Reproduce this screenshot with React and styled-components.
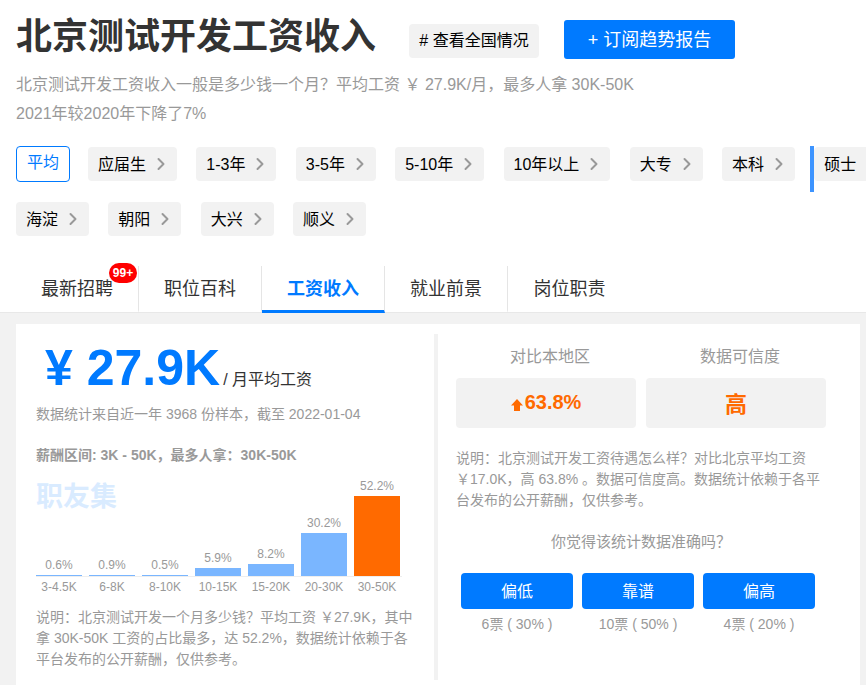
import React from "react";
import styled, { createGlobalStyle } from "styled-components";
import { ChevronRight } from "lucide-react";

const GlobalStyle = createGlobalStyle`
  html, body {
    margin: 0;
    padding: 0;
    height: 685px;
    overflow: hidden;
    background: #fff;
    font-family: "Liberation Sans", "Noto Sans CJK SC", sans-serif;
  }
  * { box-sizing: border-box; }
`;

const Page = styled.div`
  width: 866px;
  height: 685px;
  overflow: hidden;
  display: flex;
  flex-direction: column;
`;

const Header = styled.header`
  padding: 0 16px;
`;

const TitleRow = styled.div`
  display: flex;
  align-items: center;
  height: 70px;
  padding-top: 9px;
`;

const Title = styled.h1`
  margin: -6px 33px 0 0;
  font-size: 36px;
  line-height: 50px;
  font-weight: 700;
  color: #333;
  white-space: nowrap;
`;

const NationTag = styled.a`
  width: 130px;
  height: 34px;
  margin: 2px 25px 0 0;
  background: #f2f2f2;
  border-radius: 4px;
  color: #000;
  font-size: 16px;
  line-height: 33px;
  text-align: center;
`;

const SubscribeButton = styled.button`
  width: 171px;
  height: 39px;
  padding: 0 0 3px;
  border: 0;
  border-radius: 3px;
  background: #007aff;
  color: #fff;
  font-family: inherit;
  font-size: 18px;
`;

const Summary = styled.p`
  margin: 0;
  font-size: 16px;
  line-height: 29px;
  color: #999;
`;

const FilterRow = styled.div`
  display: flex;
  align-items: flex-start;
  gap: 19.3px;
  width: 850px;
  height: 46px;
  margin-top: ${props => props.$top}px;
  overflow: hidden;
`;

const Pill = styled.a`
  flex: none;
  display: flex;
  align-items: center;
  height: 34px;
  margin-top: 1px;
  padding: 0 6px 2px 10px;
  gap: 5px;
  background: #f2f2f2;
  border-radius: 4px;
  color: #000;
  font-size: 16px;
  white-space: nowrap;
  svg {
    color: #999;
    margin-top: 2px;
  }
`;

const ActivePill = styled.a`
  flex: none;
  width: 54px;
  height: 36px;
  margin-right: -1.3px;
  border: 1px solid #007aff;
  border-radius: 4px;
  color: #007aff;
  font-size: 16px;
  line-height: 32px;
  text-align: center;
`;

const HighlightedSlot = styled.div`
  flex: none;
  height: 46px;
  margin-left: -4px;
  border-left: 4px solid #3d94ff;
`;

const Tabs = styled.nav`
  display: flex;
  height: 47px;
  margin-top: 19px;
  padding: 0 16px;
  border-bottom: 1px solid #e8e8e8;
`;

const Tab = styled.a`
  position: relative;
  flex: none;
  width: 123px;
  height: 47px;
  border-right: ${props => (props.$last ? "0" : "1px solid #e5e5e5")};
  border-bottom: 3px solid ${props => (props.$active ? "#007aff" : "transparent")};
  color: ${props => (props.$active ? "#007aff" : "#333")};
  font-size: 18px;
  font-weight: ${props => (props.$active ? 700 : 400)};
  line-height: 46px;
  text-align: center;
`;

const Badge = styled.span`
  position: absolute;
  top: -3px;
  right: 1px;
  width: 28px;
  height: 20px;
  border-radius: 10px;
  background: #f00;
  color: #fff;
  font-size: 12px;
  font-weight: 700;
  line-height: 20px;
  text-align: center;
`;

const Content = styled.main`
  flex: 1;
  padding: 11px 6px 0 16px;
  background: #f2f2f2;
`;

const Card = styled.section`
  display: flex;
  height: 100%;
  background: #fff;
`;

const SalaryColumn = styled.div`
  position: relative;
  width: 418px;
  padding: 0 20px;
`;

const BigSalary = styled.div`
  display: flex;
  align-items: baseline;
  height: 74px;
  padding: 15px 0 0 9px;
`;

const BigNumber = styled.strong`
  font-size: 50px;
  line-height: 58px;
  color: #007aff;
  white-space: pre;
`;

const BigUnit = styled.span`
  margin-left: 3px;
  font-size: 16px;
  color: #333;
`;

const Note = styled.p`
  margin: ${props => props.$top || 0}px 0 0;
  font-size: 14px;
  line-height: 21px;
  color: #999;
  font-weight: ${props => (props.$bold ? 700 : 400)};
  white-space: nowrap;
`;

const Watermark = styled.span`
  position: absolute;
  left: 20px;
  top: 158px;
  font-size: 27px;
  line-height: 30px;
  font-weight: 700;
  color: #d9ebff;
`;

const Chart = styled.div`
  display: flex;
  align-items: flex-end;
  gap: 7px;
  width: 366px;
  height: 87px;
  margin-top: 24px;
  border-bottom: 1px solid #eee;
`;

const ChartColumn = styled.div`
  width: 46px;
  flex: none;
  display: flex;
  flex-direction: column;
  align-items: center;
`;

const BarValue = styled.span`
  font-size: 12px;
  line-height: 14px;
  margin-bottom: 3px;
  color: #999;
`;

const Bar = styled.div`
  width: 46px;
  height: ${props => props.$height}px;
  background: ${props => (props.$top ? "#ff6a00" : "#7ab6ff")};
`;

const ChartLabels = styled.div`
  display: flex;
  gap: 7px;
  margin-top: 2px;
`;

const ChartLabel = styled.span`
  flex: none;
  width: 46px;
  font-size: 12px;
  line-height: 16px;
  color: #999;
  text-align: center;
  white-space: nowrap;
`;

const Divider = styled.div`
  flex: none;
  width: 4px;
  height: 346px;
  margin-top: 10px;
  background: #f2f2f2;
`;

const CompareColumn = styled.div`
  flex: 1;
  padding: 0 18px;
`;

const StatGrid = styled.div`
  display: grid;
  grid-template-columns: 180px 180px;
  gap: 0 10px;
  padding-top: 22px;
`;

const StatTitle = styled.div`
  height: 32px;
  padding-left: 8px;
  font-size: 16px;
  line-height: 22px;
  color: #999;
  text-align: center;
`;

const StatBox = styled.div`
  display: flex;
  align-items: center;
  justify-content: center;
  gap: 2px;
  height: 50px;
  padding-bottom: 2px;
  background: #f2f2f2;
  border-radius: 4px;
  color: #ff6a00;
  font-size: ${props => (props.$large ? 22 : 20)}px;
  font-weight: 700;
  svg {
    margin-top: 5px;
  }
`;

const Question = styled.p`
  width: 370px;
  margin: 20px 0 0;
  font-size: 15px;
  line-height: 22px;
  color: #999;
  text-align: center;
`;

const VoteRow = styled.div`
  display: flex;
  gap: 9px;
  margin: 20px 0 0 5px;
`;

const Vote = styled.div`
  width: 112px;
  text-align: center;
`;

const VoteButton = styled.button`
  width: 112px;
  height: 36px;
  padding: 0 0 3px;
  border: 0;
  border-radius: 4px;
  background: #007aff;
  color: #fff;
  font-family: inherit;
  font-size: 16px;
`;

const VoteCount = styled.div`
  margin-top: 5px;
  font-size: 14px;
  line-height: 20px;
  color: #999;
  white-space: nowrap;
`;

const experience = ["应届生", "1-3年", "3-5年", "5-10年", "10年以上", "大专", "本科"];
const districts = ["海淀", "朝阳", "大兴", "顺义"];
const tabs = ["最新招聘", "职位百科", "工资收入", "就业前景", "岗位职责"];
const bars = [
  { label: "3-4.5K", value: "0.6%", height: 1 },
  { label: "6-8K", value: "0.9%", height: 1 },
  { label: "8-10K", value: "0.5%", height: 1 },
  { label: "10-15K", value: "5.9%", height: 8 },
  { label: "15-20K", value: "8.2%", height: 12 },
  { label: "20-30K", value: "30.2%", height: 43 },
  { label: "30-50K", value: "52.2%", height: 80, top: true },
];
const votes = [
  { name: "偏低", count: "6票 ( 30% )" },
  { name: "靠谱", count: "10票 ( 50% )" },
  { name: "偏高", count: "4票 ( 20% )" },
];

const FilterPill = ({ children }) => (
  <Pill>
    {children}
    <ChevronRight size={20} strokeWidth={2.4} />
  </Pill>
);

const UpArrow = () => (
  <svg width="12" height="12" viewBox="0 0 12 12" aria-hidden="true">
    <path d="M6 0 12 6.5H9V12H3V6.5H0Z" fill="#ff6a00" />
  </svg>
);

const App = () => (
  <Page>
    <GlobalStyle />
    <Header>
      <TitleRow>
        <Title>北京测试开发工资收入</Title>
        <NationTag># 查看全国情况</NationTag>
        <SubscribeButton>+ 订阅趋势报告</SubscribeButton>
      </TitleRow>
      <Summary>
        北京测试开发工资收入一般是多少钱一个月？平均工资 ￥ 27.9K/月，最多人拿 30K-50K
        <br />
        2021年较2020年下降了7%
      </Summary>
      <FilterRow $top={18}>
        <ActivePill>平均</ActivePill>
        {experience.map(item => (
          <FilterPill key={item}>{item}</FilterPill>
        ))}
        <HighlightedSlot>
          <FilterPill>硕士</FilterPill>
        </HighlightedSlot>
      </FilterRow>
      <FilterRow $top={9}>
        {districts.map(item => (
          <FilterPill key={item}>{item}</FilterPill>
        ))}
      </FilterRow>
    </Header>
    <Tabs>
      {tabs.map((item, i) => (
        <Tab key={item} $active={i === 2} $last={i === 4}>
          {item}
          {i === 0 && <Badge>99+</Badge>}
        </Tab>
      ))}
    </Tabs>
    <Content>
      <Card>
        <SalaryColumn>
          <BigSalary>
            <BigNumber>¥ 27.9K</BigNumber>
            <BigUnit>/ 月平均工资</BigUnit>
          </BigSalary>
          <Note $top={6}>数据统计来自近一年 3968 份样本，截至 2022-01-04</Note>
          <Note $top={20} $bold>
            薪酬区间: 3K - 50K，最多人拿：30K-50K
          </Note>
          <Watermark>职友集</Watermark>
          <Chart>
            {bars.map(bar => (
              <ChartColumn key={bar.label}>
                <BarValue>{bar.value}</BarValue>
                <Bar $height={bar.height} $top={bar.top} />
              </ChartColumn>
            ))}
          </Chart>
          <ChartLabels>
            {bars.map(bar => (
              <ChartLabel key={bar.label}>{bar.label}</ChartLabel>
            ))}
          </ChartLabels>
          <Note $top={12}>
            说明：北京测试开发一个月多少钱？平均工资 ￥27.9K，其中
            <br />
            拿 30K-50K 工资的占比最多，达 52.2%，数据统计依赖于各
            <br />
            平台发布的公开薪酬，仅供参考。
          </Note>
        </SalaryColumn>
        <Divider />
        <CompareColumn>
          <StatGrid>
            <StatTitle>对比本地区</StatTitle>
            <StatTitle>数据可信度</StatTitle>
            <StatBox>
              <UpArrow />
              63.8%
            </StatBox>
            <StatBox $large>高</StatBox>
          </StatGrid>
          <Note $top={20}>
            说明：北京测试开发工资待遇怎么样？对比北京平均工资
            <br />
            ￥17.0K，高 63.8% 。数据可信度高。数据统计依赖于各平
            <br />
            台发布的公开薪酬，仅供参考。
          </Note>
          <Question>你觉得该统计数据准确吗？</Question>
          <VoteRow>
            {votes.map(vote => (
              <Vote key={vote.name}>
                <VoteButton>{vote.name}</VoteButton>
                <VoteCount>{vote.count}</VoteCount>
              </Vote>
            ))}
          </VoteRow>
        </CompareColumn>
      </Card>
    </Content>
  </Page>
);

export default App;
